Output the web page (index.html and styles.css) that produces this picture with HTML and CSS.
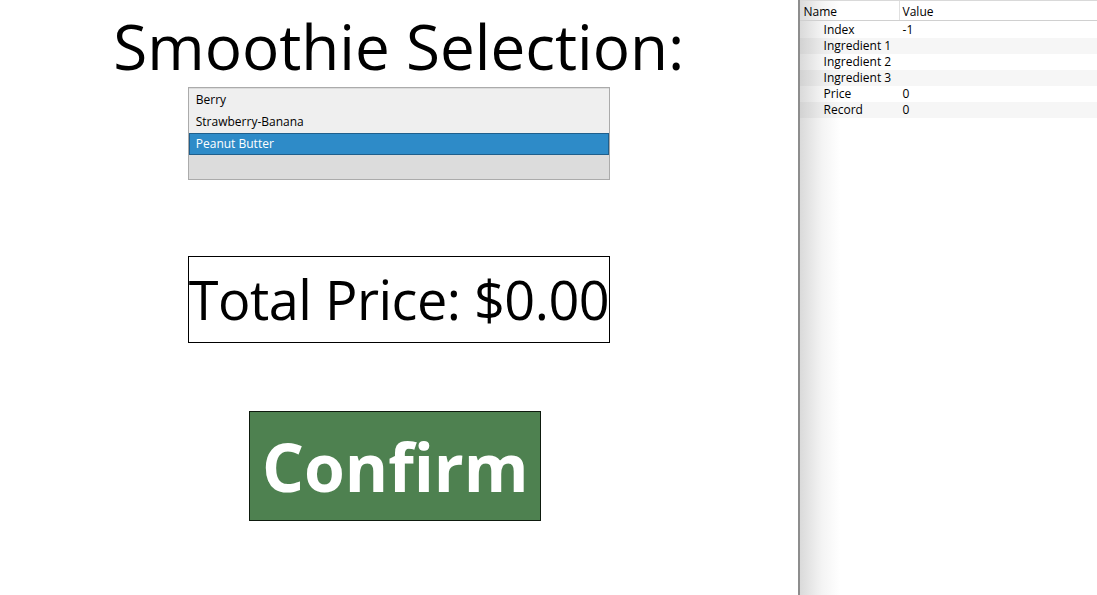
FILE: index.html
```html
<!DOCTYPE html>
<html lang="en">
<head>
  <meta charset="UTF-8">
  <title>Smoothie Selection</title>
  <link rel="stylesheet" href="styles.css">
</head>
<body>
  <div class="app">
    <div class="main">
      <h1>Smoothie Selection:</h1>

      <div class="listbox">
        <div class="list-item">Berry</div>
        <div class="list-item">Strawberry-Banana</div>
        <div class="list-item selected">Peanut Butter</div>
        <div class="list-empty"></div>
      </div>

      <div class="price-box">Total Price: $0.00</div>

      <button class="confirm">Confirm</button>
    </div>

    <div class="panel">
      <div class="grid-row header">
        <div class="cell name-col">Name</div>
        <div class="cell value-col">Value</div>
      </div>
      <div class="grid-row">
        <div class="cell name-col prop">Index</div>
        <div class="cell value-col">-1</div>
      </div>
      <div class="grid-row alt">
        <div class="cell name-col prop">Ingredient 1</div>
        <div class="cell value-col"></div>
      </div>
      <div class="grid-row">
        <div class="cell name-col prop">Ingredient 2</div>
        <div class="cell value-col"></div>
      </div>
      <div class="grid-row alt">
        <div class="cell name-col prop">Ingredient 3</div>
        <div class="cell value-col"></div>
      </div>
      <div class="grid-row">
        <div class="cell name-col prop">Price</div>
        <div class="cell value-col">0</div>
      </div>
      <div class="grid-row alt">
        <div class="cell name-col prop">Record</div>
        <div class="cell value-col">0</div>
      </div>
    </div>
  </div>
</body>
</html>
```

FILE: styles.css
```css
html, body {
  margin: 0;
  height: 100%;
  background-color: #fff;
}

body {
  font-family: "Open Sans", "Noto Sans", sans-serif;
  color: #000;
}

.app {
  display: flex;
  height: 595px;
}

.main {
  width: 799px;
  display: flex;
  flex-direction: column;
  align-items: center;
}

h1 {
  margin: 6px 0 0 0;
  font-size: 62px;
  font-weight: normal;
  line-height: 80px;
  height: 81px;
}

.listbox {
  width: 420px;
  height: 90px;
  border: 1px solid #ababab;
  background-color: #dcdcdc;
  display: flex;
  flex-direction: column;
  padding-top: 1px;
  box-sizing: content-box;
}

.list-item {
  height: 22px;
  line-height: 22px;
  padding-left: 7px;
  font-size: 12px;
  background-color: #efefef;
  box-sizing: border-box;
}

.list-item.selected {
  background-color: #2e8bc8;
  color: #fff;
  border: 1px solid #1f5f8c;
  line-height: 20px;
  padding-left: 6px;
}

.list-empty {
  flex: 1;
}

.price-box {
  margin-top: 76px;
  width: 420px;
  height: 85px;
  border: 1px solid #000;
  font-size: 54px;
  line-height: 85px;
  text-align: center;
  white-space: nowrap;
  letter-spacing: -0.5px;
}

.confirm {
  margin-top: 68px;
  margin-right: 7px;
  width: 292px;
  height: 110px;
  background-color: #4e8150;
  border: 1px solid #0e1a0e;
  color: #fff;
  font-family: "Open Sans", "Noto Sans", sans-serif;
  font-weight: bold;
  font-size: 66px;
  padding: 0;
}

.panel {
  width: 298px;
  border-left: 2px solid #8d8d8d;
  background: linear-gradient(to right, #dadada 0px, #f4f4f4 22px, #fff 40px);
  font-size: 12px;
}

.grid-row {
  display: flex;
  height: 16px;
  line-height: 16px;
}

.grid-row.alt {
  background-color: rgba(0, 0, 0, 0.035);
}

.grid-row.header {
  height: 19px;
  line-height: 21px;
  border-top: 1px solid #d9d9d9;
  border-bottom: 1px solid #d0d0d0;
  margin-bottom: 1px;
}

.cell {
  white-space: nowrap;
  overflow: hidden;
}

.name-col {
  width: 100px;
  padding-left: 4px;
  box-sizing: border-box;
}

.header .name-col {
  border-right: 1px solid #e0e0e0;
}

.name-col.prop {
  padding-left: 24px;
}

.value-col {
  flex: 1;
  padding-left: 3px;
}
```
